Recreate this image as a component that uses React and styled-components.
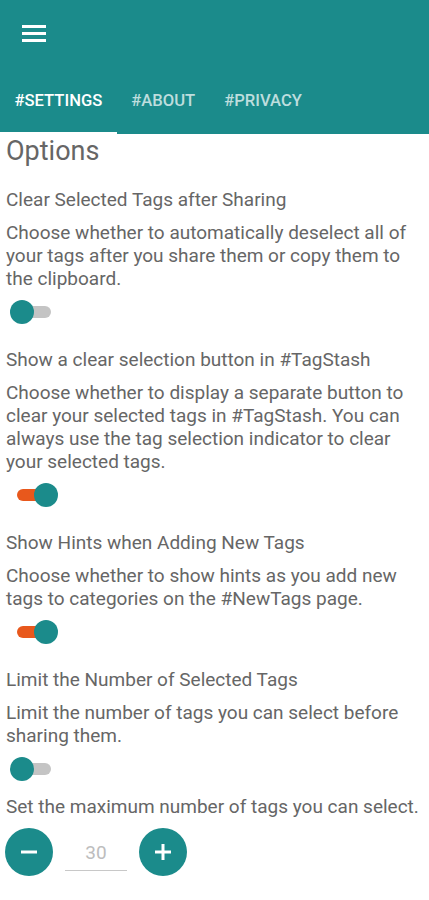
import React from 'react'
import styled, {createGlobalStyle} from 'styled-components'

const teal = '#1b8b8b'
const orange = '#e8581c'

const GlobalStyle = createGlobalStyle`
  body {
    margin: 0;
    background: #fff;
    font-family: Roboto, "Noto Sans", sans-serif;
  }
`

const Header = styled.header`
  background: ${teal};
  color: #fff;
`

const Toolbar = styled.div`
  height: 66px;
  display: flex;
  align-items: center;
  padding-left: 22px;
`

const MenuIcon = styled.svg`
  width: 24px;
  height: 18px;
  margin-top: 1px;
`

const Tabs = styled.nav`
  display: flex;
  height: 68px;
`

const Tab = styled.div`
  position: relative;
  display: flex;
  align-items: center;
  padding: 0 14.5px;
  font-size: 16.6px;
  font-weight: 500;
  color: ${props => props.active ? '#fff' : 'rgba(255,255,255,0.72)'};
  &::after {
    content: '';
    display: ${props => props.active ? 'block' : 'none'};
    position: absolute;
    left: 0;
    right: 0;
    bottom: -1px;
    height: 3px;
    background: #fff;
  }
`

const Content = styled.main`
  padding: 0 6px 24px;
  color: #666;
`

const Heading = styled.h1`
  margin: 0 0 20px;
  font-size: 27px;
  font-weight: 400;
  line-height: 34px;
`

const Section = styled.section`
  margin-bottom: ${props => props.last ? '0' : '24px'};
`

const Title = styled.div`
  font-size: 19px;
  line-height: 23px;
  margin-bottom: 10px;
`

const Body = styled.p`
  margin: 0 0 10px;
  font-size: 19px;
  line-height: 23px;
`

const Hint = styled(Body)`
  margin: 14px 0 10px;
`

const Switch = styled.div`
  position: relative;
  width: 48px;
  height: 24px;
  margin-left: 4px;
`

const Track = styled.div`
  position: absolute;
  left: 7px;
  right: 7px;
  top: 6px;
  height: 12px;
  border-radius: 6px;
  background: ${props => props.on ? orange : '#c4c4c4'};
`

const Knob = styled.div`
  position: absolute;
  top: 0;
  left: ${props => props.on ? '24px' : '0'};
  width: 24px;
  height: 24px;
  border-radius: 50%;
  background: ${teal};
`

const Stepper = styled.div`
  display: flex;
  align-items: center;
  gap: 12px;
  margin-left: -1px;
`

const RoundBtn = styled.div`
  width: 48px;
  height: 48px;
  border-radius: 50%;
  background: ${teal};
  display: flex;
  align-items: center;
  justify-content: center;
`

const NumberField = styled.div`
  width: 62px;
  height: 35px;
  margin-top: 1px;
  border-bottom: 1px solid #c8c8c8;
  color: #bdbdbd;
  font-size: 19px;
  display: flex;
  align-items: center;
  justify-content: center;
`

const Toggle = ({on}) => (
  <Switch>
    <Track on={on ? 1 : 0} />
    <Knob on={on ? 1 : 0} />
  </Switch>
)

const settings = [
  {
    title: 'Clear Selected Tags after Sharing',
    body: 'Choose whether to automatically deselect all of your tags after you share them or copy them to the clipboard.',
    on: false,
  },
  {
    title: 'Show a clear selection button in #TagStash',
    body: 'Choose whether to display a separate button to clear your selected tags in #TagStash. You can always use the tag selection indicator to clear your selected tags.',
    on: true,
  },
  {
    title: 'Show Hints when Adding New Tags',
    body: 'Choose whether to show hints as you add new tags to categories on the #NewTags page.',
    on: true,
  },
  {
    title: 'Limit the Number of Selected Tags',
    body: 'Limit the number of tags you can select before sharing them.',
    on: false,
  },
]

export default function App() {
  return (
    <>
      <GlobalStyle />
      <Header>
        <Toolbar>
          <MenuIcon viewBox="0 0 24 18">
            <rect x="0" y="0" width="24" height="3" fill="#fff" />
            <rect x="0" y="7" width="24" height="3" fill="#fff" />
            <rect x="0" y="14" width="24" height="3" fill="#fff" />
          </MenuIcon>
        </Toolbar>
        <Tabs>
          <Tab active>#SETTINGS</Tab>
          <Tab>#ABOUT</Tab>
          <Tab>#PRIVACY</Tab>
        </Tabs>
      </Header>
      <Content>
        <Heading>Options</Heading>
        {settings.map((s, i) => (
          <Section key={s.title} last={i === settings.length - 1 ? 1 : 0}>
            <Title>{s.title}</Title>
            <Body>{s.body}</Body>
            <Toggle on={s.on} />
          </Section>
        ))}
        <Hint>Set the maximum number of tags you can select.</Hint>
        <Stepper>
          <RoundBtn>
            <svg width="18" height="18" viewBox="0 0 18 18">
              <rect x="1" y="7.5" width="16" height="3" fill="#fff" />
            </svg>
          </RoundBtn>
          <NumberField>30</NumberField>
          <RoundBtn>
            <svg width="18" height="18" viewBox="0 0 18 18">
              <rect x="1" y="7.5" width="16" height="3" fill="#fff" />
              <rect x="7.5" y="1" width="3" height="16" fill="#fff" />
            </svg>
          </RoundBtn>
        </Stepper>
      </Content>
    </>
  )
}
